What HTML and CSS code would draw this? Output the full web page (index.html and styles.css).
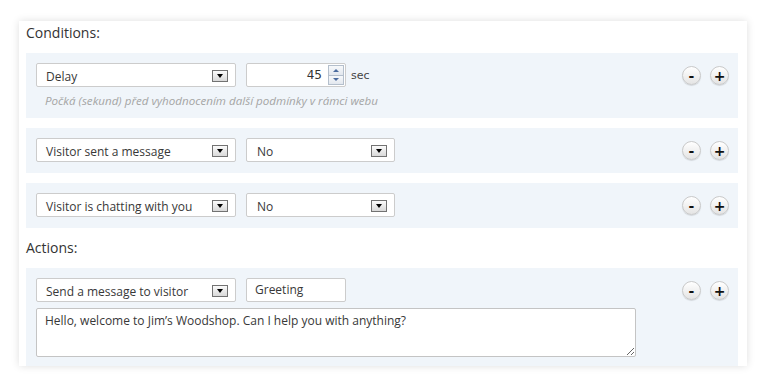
FILE: index.html
```html
<!DOCTYPE html>
<html lang="cs">
<head>
    <meta charset="UTF-8">
    <title>Rules</title>
    <link rel="stylesheet" href="styles.css">
</head>
<body>
    <div class="panel">
        <h3 class="section-title">Conditions:</h3>

        <div class="rule">
            <div class="rule-body">
                <div class="line">
                    <div class="select wide"><span class="label">Delay</span><i class="arrow"></i></div>
                    <div class="number">
                        <span class="value">45</span>
                        <span class="spin"><b class="up"></b><b class="down"></b></span>
                    </div>
                    <span class="unit">sec</span>
                </div>
                <p class="hint">Počká (sekund) před vyhodnocením další podmínky v rámci webu</p>
            </div>
            <div class="rule-buttons">
                <button class="round">-</button>
                <button class="round">+</button>
            </div>
        </div>

        <div class="rule">
            <div class="rule-body">
                <div class="line">
                    <div class="select wide"><span class="label">Visitor sent a message</span><i class="arrow"></i></div>
                    <div class="select short"><span class="label">No</span><i class="arrow"></i></div>
                </div>
            </div>
            <div class="rule-buttons">
                <button class="round">-</button>
                <button class="round">+</button>
            </div>
        </div>

        <div class="rule">
            <div class="rule-body">
                <div class="line">
                    <div class="select wide"><span class="label">Visitor is chatting with you</span><i class="arrow"></i></div>
                    <div class="select short"><span class="label">No</span><i class="arrow"></i></div>
                </div>
            </div>
            <div class="rule-buttons">
                <button class="round">-</button>
                <button class="round">+</button>
            </div>
        </div>

        <h3 class="section-title">Actions:</h3>

        <div class="rule last">
            <div class="rule-body">
                <div class="line">
                    <div class="select wide"><span class="label">Send a message to visitor</span><i class="arrow"></i></div>
                    <div class="text-field">Greeting</div>
                </div>
                <textarea class="message" readonly>Hello, welcome to Jim’s Woodshop. Can I help you with anything?</textarea>
            </div>
            <div class="rule-buttons">
                <button class="round">-</button>
                <button class="round">+</button>
            </div>
        </div>
    </div>
</body>
</html>
```

FILE: styles.css
```css
* {
    box-sizing: border-box;
}

body {
    margin: 0;
    padding: 21px 20px 18px 19px;
    background: #fff;
    font-family: "Open Sans", Arial, sans-serif;
    color: #333;
}

.panel {
    width: 728px;
    padding: 2px 9px 0 7px;
    background: #fff;
    box-shadow: 0 0 8px rgba(0, 0, 0, 0.13);
}

.section-title {
    margin: 0 0 10px;
    font-size: 14px;
    font-weight: normal;
    line-height: 20px;
    color: #333;
}

.rule {
    display: flex;
    justify-content: space-between;
    align-items: flex-start;
    margin-bottom: 10px;
    padding: 10px 9px 11px 10px;
    background: #f0f5fa;
}

.rule.last {
    margin-bottom: 0;
    padding-bottom: 9px;
}

.rule-body {
    display: flex;
    flex-direction: column;
}

.line {
    display: flex;
    align-items: center;
    gap: 10px;
}

/* fake selects */
.select {
    display: flex;
    align-items: center;
    height: 24px;
    padding: 0 7px 0 9px;
    background: #fff;
    border: 1px solid #ccc;
    border-radius: 2px;
    font-size: 12px;
    color: #383838;
}

.select.wide { width: 200px; }
.select.short { width: 149px; padding-left: 10px; }

.select .label {
    flex: 1;
    padding-top: 2px;
    white-space: nowrap;
}

.arrow {
    display: flex;
    justify-content: center;
    align-items: flex-end;
    width: 16px;
    height: 12px;
    margin-top: 2px;
    padding-bottom: 3px;
    border: 1px solid #727272;
    background: linear-gradient(#fbfbfb, #d9d9d9);
}

.arrow::after {
    content: "";
    border-top: 4px solid #000;
    border-left: 3.5px solid transparent;
    border-right: 3.5px solid transparent;
}

/* number field */
.number {
    display: flex;
    align-items: center;
    justify-content: flex-end;
    width: 100px;
    height: 24px;
    padding: 0 1px 0 8px;
    background: #fff;
    border: 1px solid #ccc;
    border-radius: 2px;
}

.number .value {
    margin-right: 6px;
    font-family: "DejaVu Sans", Verdana, sans-serif;
    font-size: 12px;
    color: #333;
}

.spin {
    display: flex;
    flex-direction: column;
    width: 16px;
    height: 20px;
}

.spin b {
    display: flex;
    justify-content: center;
    align-items: center;
    flex: 1;
    border: 1px solid #b4bfcc;
    background: linear-gradient(#f7f9fb, #e2e7ee);
}

.spin b + b {
    border-top: none;
}

.spin .up::after {
    content: "";
    border-bottom: 3px solid #4b6b9e;
    border-left: 3px solid transparent;
    border-right: 3px solid transparent;
}

.spin .down::after {
    content: "";
    border-top: 3px solid #4b6b9e;
    border-left: 3px solid transparent;
    border-right: 3px solid transparent;
}

.unit {
    margin-left: -5px;
    font-family: "DejaVu Sans", Verdana, sans-serif;
    font-size: 11px;
    color: #444;
}

.hint {
    margin: 0;
    padding: 7px 0 0 9px;
    font-size: 11.6px;
    font-style: italic;
    line-height: 13px;
    color: #a5a5a5;
}

.text-field {
    width: 100px;
    height: 24px;
    padding: 0 8px;
    background: #fff;
    border: 1px solid #ccc;
    border-radius: 2px;
    font-size: 12px;
    line-height: 22px;
    color: #383838;
}

.message {
    display: block;
    width: 600px;
    height: 49px;
    margin-top: 6px;
    padding: 3px 8px;
    background: #fff;
    border: 1px solid #c4c4c4;
    border-radius: 2px;
    font-family: "Open Sans", Arial, sans-serif;
    font-size: 12px;
    line-height: 18px;
    color: #383838;
    outline: none;
}

/* add / remove */
.rule-buttons {
    display: flex;
    gap: 9px;
    margin-top: 3px;
}

.round {
    display: flex;
    justify-content: center;
    align-items: center;
    width: 19px;
    height: 19px;
    padding: 0;
    border: 1px solid #c9c9c9;
    border-radius: 50%;
    background: linear-gradient(#ffffff, #e4e4e4);
    box-shadow: 0 1px 1px rgba(0, 0, 0, 0.12);
    font-family: "DejaVu Sans", Verdana, sans-serif;
    font-size: 14px;
    font-weight: bold;
    line-height: 1;
    color: #111;
    cursor: pointer;
}
```
